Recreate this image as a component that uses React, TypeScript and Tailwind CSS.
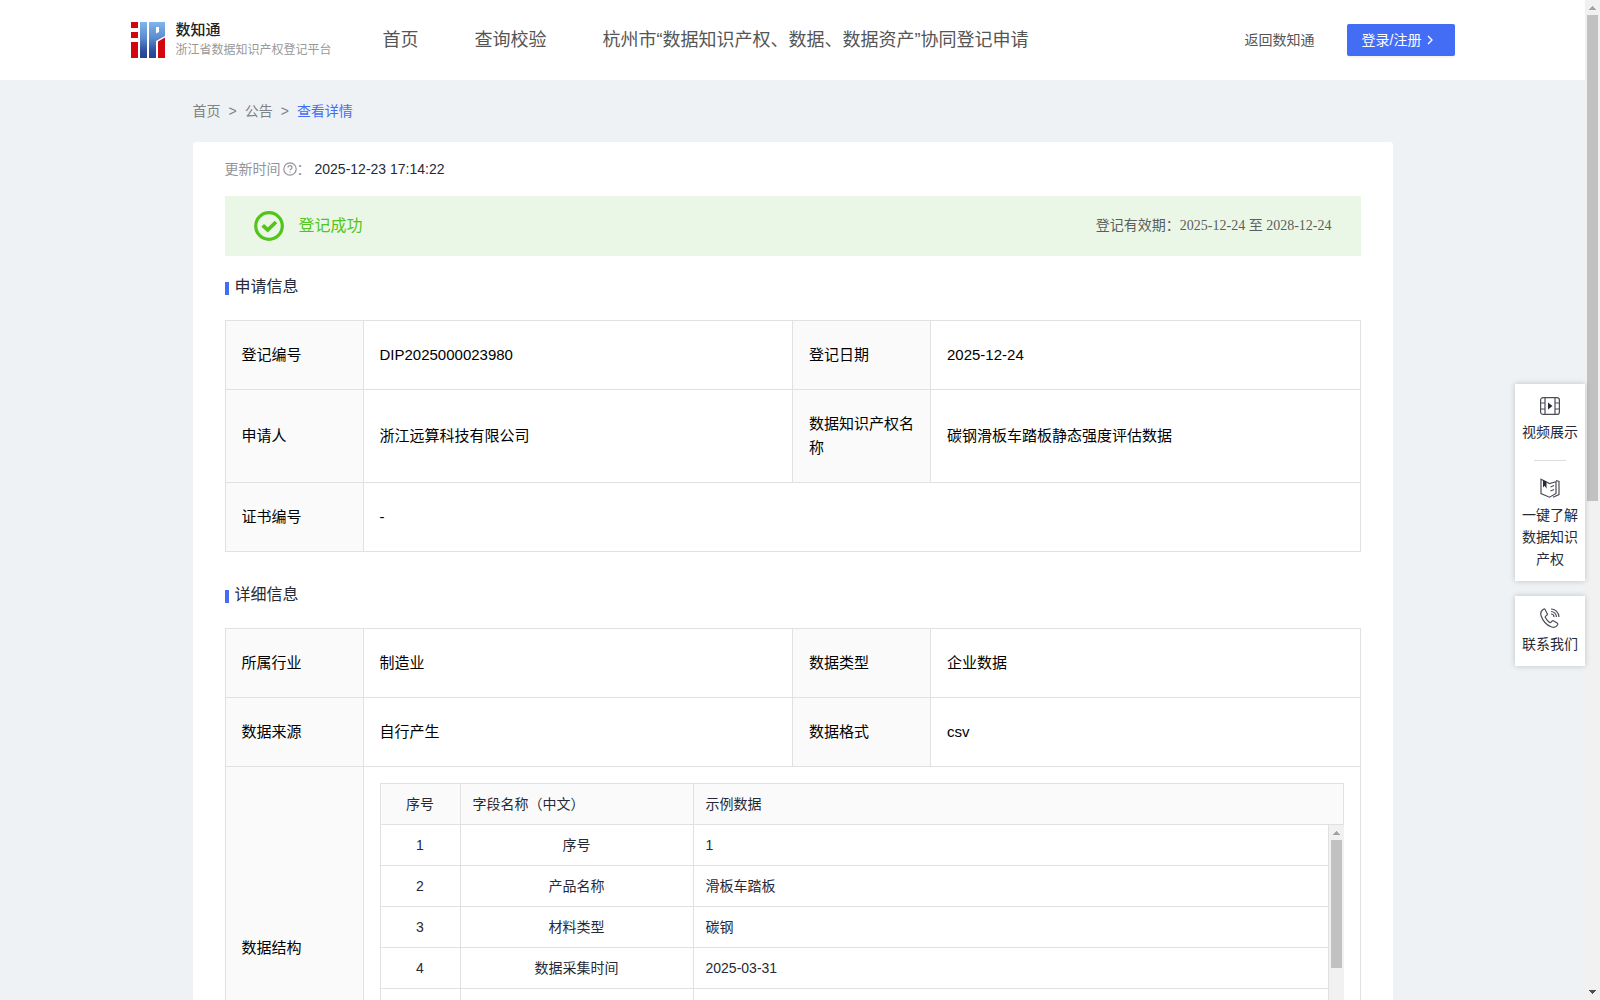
import React from "react";

const SANS = "font-['Liberation_Sans','Noto_Sans_CJK_SC',sans-serif]";

function Logo() {
  return (
    <svg width="34" height="36" viewBox="0 0 34 36" aria-hidden="true">
      <defs>
        <linearGradient id="logoBlue" gradientUnits="userSpaceOnUse" x1="0" y1="0" x2="0" y2="36">
          <stop offset="0" stopColor="#7fb6ea" />
          <stop offset="0.45" stopColor="#5a8bd0" />
          <stop offset="0.8" stopColor="#2f4f9f" />
          <stop offset="1" stopColor="#27408f" />
        </linearGradient>
      </defs>
      <path d="M0 0h7v6H0zM0 10h7v6H0zM0 20h7v16H0z" fill="#d2060c" />
      <path d="M9 0h7v36H9z" fill="url(#logoBlue)" />
      <path d="M18 0h16v14l-9 5v17h-7z" fill="url(#logoBlue)" />
      <path d="M25 5h3v5l-3 1.500z" fill="#fff" />
      <path d="M27 19.500l7-4V36h-7z" fill="#d2060c" />
    </svg>
  );
}

function ScrollBar({ thumb, bottomArrow }: { thumb: string; bottomArrow?: boolean }) {
  return (
    <div aria-hidden="true" className="flex w-[15px] shrink-0 flex-col items-center bg-[#f1f1f1]">
      <svg width="15" height="15" viewBox="0 0 15 15" shapeRendering="crispEdges" className="shrink-0">
        <path d="M7 6h1v1h1v1h1v1h1v1H4V9h1V8h1V7h1z" fill="#a3a3a3" />
      </svg>
      <div className={`w-[11px] shrink-0 bg-[#c1c1c1] ${thumb}`} />
      {bottomArrow && (
        <svg width="15" height="15" viewBox="0 0 15 15" shapeRendering="crispEdges" className="mt-auto shrink-0">
          <path d="M4 5h7v1h-1v1H9v1H8v1H7V8H6V7H5V6H4z" fill="#505050" />
        </svg>
      )}
    </div>
  );
}

function Header() {
  return (
    <header className="h-20 bg-white">
      <div className="mx-auto flex h-full max-w-[1324px] items-center">
        <a href="#" className="flex w-[252px] items-center gap-[11px]">
          <Logo />
          <span className="flex flex-col whitespace-nowrap">
            <span className="text-[15px] leading-5 font-medium text-[#222]">数知通</span>
            <span className="text-xs leading-5 text-[#999]">浙江省数据知识产权登记平台</span>
          </span>
        </a>
        <nav className="flex gap-14 text-lg leading-6 whitespace-nowrap text-[#555]">
          <a href="#">首页</a>
          <a href="#">查询校验</a>
          <a href="#">杭州市“数据知识产权、数据、数据资产”协同登记申请</a>
        </nav>
        <a href="#" className="ml-auto text-sm text-[#555]">返回数知通</a>
        <button
          type="button"
          className="ml-8 flex h-8 w-[108px] items-center gap-1 rounded-[2px] bg-[#446df6] pl-[15px] text-sm text-white shadow-[0_2px_0_rgba(0,0,0,0.04)]"
        >
          登录/注册
          <svg width="10" height="10" viewBox="0 0 10 10" fill="none" stroke="#fff" strokeWidth="1.300" aria-hidden="true">
            <path d="M3 1l4 4-4 4" />
          </svg>
        </button>
      </div>
    </header>
  );
}

function SectionTitle({ children }: { children: React.ReactNode }) {
  return (
    <h2 className="flex h-6 items-center gap-1.5 text-base text-[#272a36]">
      <span className="mt-[3px] h-[13px] w-1 bg-[#446df6]" />
      {children}
    </h2>
  );
}

const CELL = "border border-[#e1e1e1] px-4 py-[22px] text-left align-middle text-[15px] leading-6 font-normal";

function Label({ children }: { children: React.ReactNode }) {
  return <th scope="row" className={`${CELL} bg-[#fafafa]`}>{children}</th>;
}

function Columns() {
  return (
    <colgroup>
      <col className="w-[138px]" />
      <col />
      <col className="w-[138px]" />
      <col />
    </colgroup>
  );
}

const FIELDS = [
  ["1", "序号", "1"],
  ["2", "产品名称", "滑板车踏板"],
  ["3", "材料类型", "碳钢"],
  ["4", "数据采集时间", "2025-03-31"],
  ["", "", ""],
];

function FieldColumns() {
  return (
    <colgroup>
      <col className="w-20" />
      <col className="w-[233px]" />
      <col />
    </colgroup>
  );
}

const FIELD_CELL = "h-[41px] border-r border-b border-[#e1e1e1] px-3 leading-[22px] font-normal";

function FieldTable() {
  return (
    <div className="text-sm text-[#272a36]">
      <table className="w-full table-fixed border-separate border-spacing-0 border-t border-l border-[#e1e1e1] bg-[#fafafa]">
        <FieldColumns />
        <thead>
          <tr>
            <th className={`${FIELD_CELL} text-center`}>序号</th>
            <th className={`${FIELD_CELL} text-left`}>字段名称（中文）</th>
            <th className={`${FIELD_CELL} text-left`}>示例数据</th>
          </tr>
        </thead>
      </table>
      <div className="flex h-[287px] overflow-hidden">
        <div className="flex-1">
          <table className="w-full table-fixed border-separate border-spacing-0 border-l border-[#e1e1e1]">
            <FieldColumns />
            <tbody>
              {FIELDS.map(([no, name, sample], row) => (
                <tr key={row}>
                  <td className={`${FIELD_CELL} text-center`}>{no}</td>
                  <td className={`${FIELD_CELL} text-center`}>{name}</td>
                  <td className={`${FIELD_CELL} text-left`}>{sample}</td>
                </tr>
              ))}
            </tbody>
          </table>
        </div>
        <ScrollBar thumb="h-32" />
      </div>
    </div>
  );
}

function SideTools() {
  const icon = { width: 20, height: 20, viewBox: "0 0 20 20", fill: "none", stroke: "#4b4d58", strokeWidth: 1.2 };
  return (
    <aside className="absolute top-96 right-[15px] z-10 flex w-[70px] flex-col gap-[15px] text-sm leading-[22px] text-[#272a36]">
      <div className="flex flex-col items-center bg-white pt-3 pb-[11px] shadow-[0_0_6px_rgba(0,0,0,0.2)]">
        <button type="button" className="flex flex-col items-center gap-[5px]">
          <svg {...icon} aria-hidden="true">
            <rect x="0.600" y="1.600" width="18.800" height="16.800" rx="2.500" />
            <path d="M5 1.600v16.800M15 1.600v16.800M.6 7H5M.6 13H5M15 7h4.400M15 13h4.400" />
            <path d="M8 6.500v7l4.500-3.500z" fill="#272a36" stroke="none" />
          </svg>
          视频展示
        </button>
        <div className="my-[17px] h-px w-8 bg-[#ddd]" />
        <button type="button" className="flex flex-col items-center gap-1.5">
          <svg {...icon} aria-hidden="true">
            <path d="M1 1.200v14.300l8.500 3.700 6.500-3.700V3.700L9.500 5.500 1 1.200z" />
            <path d="M16 2.500l3 1v13l-6 2.700" />
            <path d="M3 2v7.500l1.700-1.700 1.800 2.900V3.800z" fill="#272a36" stroke="none" />
            <path d="M10.500 9l3.500-1.500M10.500 13l3.500-1.500" />
          </svg>
          <span className="w-14">一键了解数据知识产权</span>
        </button>
      </div>
      <button type="button" className="flex flex-col items-center gap-[5px] bg-white pt-3 pb-[11px] shadow-[0_0_6px_rgba(0,0,0,0.2)]">
        <svg {...icon} aria-hidden="true">
          <path d="M3.500 1.200C1.200 2.500.2 5 1.200 8c1.600 4.800 5.500 9 9.800 10.700 3 1.200 5.500.2 6.600-2 .3-.7.100-1.200-.5-1.600l-3.300-2.200c-.7-.5-1.300-.4-1.800.2l-.9 1.100c-.4.5-.9.600-1.500.2-1.800-1.200-3.300-2.900-4.200-4.800-.3-.6-.2-1.100.300-1.500l1.100-.9c.6-.5.7-1.100.3-1.800L5.200 1.700c-.4-.7-1-.9-1.700-.5z" />
          <path d="M11 1c4.200 0 8 3.500 8 8M11 3.500c2.900 0 5.500 2.400 5.500 5.500M11 6c1.600 0 3 1.300 3 3" />
        </svg>
        联系我们
      </button>
    </aside>
  );
}

export default function App() {
  return (
    <div className={`relative flex h-screen text-black ${SANS}`}>
      <div className="min-w-0 flex-1 overflow-hidden bg-[#eef2f5]">
        <Header />
        <main className="mx-auto max-w-[1200px]">
          <nav className="flex h-[62px] items-center gap-2 text-sm text-[#808185]">
            <a href="#">首页</a>
            <span>&gt;</span>
            <a href="#">公告</a>
            <span>&gt;</span>
            <a href="#" className="text-[#446df6]">查看详情</a>
          </nav>
          <div className="rounded-[3px] bg-white px-8 pt-4">
            <div className="flex h-[22px] items-center text-sm text-[#939499]">
              更新时间
              <svg width="14" height="14" viewBox="0 0 14 14" fill="none" stroke="#939499" strokeWidth="1.200" className="ml-0.5" aria-hidden="true">
                <circle cx="7" cy="7" r="6.200" />
                <path d="M5 5.600c0-2.600 4-2.600 4 0C9 6.900 7 6.900 7 8.300M7 9.400v1.200" />
              </svg>
              ：
              <span className="ml-1 text-[#272a36]">2025-12-23 17:14:22</span>
            </div>
            <div className="mt-4 flex h-[60px] items-center bg-[#ebf7e6] px-[29px]">
              <svg width="30" height="30" viewBox="0 0 30 30" fill="none" stroke="#52c41a" aria-hidden="true">
                <circle cx="15" cy="15" r="13.300" strokeWidth="3.200" />
                <path d="M8.700 14.300l5 4.700 8.300-8" strokeWidth="3.800" />
              </svg>
              <span className="ml-[15px] text-base text-[#52c41a]">登记成功</span>
              <span className="ml-auto font-['Liberation_Serif','Noto_Sans_CJK_SC',serif] text-sm text-[#5b5d60]">
                登记有效期：2025-12-24 至 2028-12-24
              </span>
            </div>
            <div className="mt-[19px]">
              <SectionTitle>申请信息</SectionTitle>
            </div>
            <table className="mt-[21px] w-full table-fixed border-collapse">
              <Columns />
              <tbody>
                <tr>
                  <Label>登记编号</Label>
                  <td className={CELL}>DIP2025000023980</td>
                  <Label>登记日期</Label>
                  <td className={CELL}>2025-12-24</td>
                </tr>
                <tr>
                  <Label>申请人</Label>
                  <td className={CELL}>浙江远算科技有限公司</td>
                  <Label>数据知识产权名称</Label>
                  <td className={CELL}>碳钢滑板车踏板静态强度评估数据</td>
                </tr>
                <tr>
                  <Label>证书编号</Label>
                  <td colSpan={3} className={CELL}>-</td>
                </tr>
              </tbody>
            </table>
            <div className="mt-[31px]">
              <SectionTitle>详细信息</SectionTitle>
            </div>
            <table className="mt-[21px] w-full table-fixed border-collapse">
              <Columns />
              <tbody>
                <tr>
                  <Label>所属行业</Label>
                  <td className={CELL}>制造业</td>
                  <Label>数据类型</Label>
                  <td className={CELL}>企业数据</td>
                </tr>
                <tr>
                  <Label>数据来源</Label>
                  <td className={CELL}>自行产生</td>
                  <Label>数据格式</Label>
                  <td className={CELL}>csv</td>
                </tr>
                <tr>
                  <Label>数据结构</Label>
                  <td colSpan={3} className="border border-[#e1e1e1] p-4">
                    <FieldTable />
                  </td>
                </tr>
              </tbody>
            </table>
          </div>
        </main>
      </div>
      <ScrollBar thumb="h-[486px]" bottomArrow />
      <SideTools />
    </div>
  );
}
